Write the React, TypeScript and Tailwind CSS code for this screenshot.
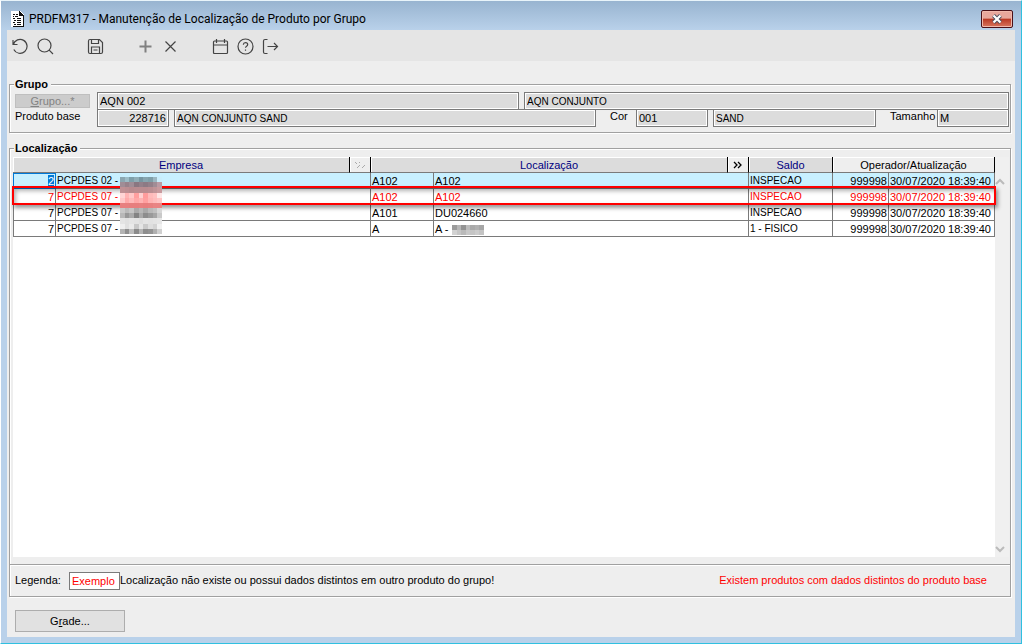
import { useState } from 'react';

const mosaicEmpresa = [
  ['#8ba7b1', '#9bbcc6', '#7e9fa9', '#8fadb6', '#7796a1', '#86a5af', '#7f9fa8', '#9bb8c2', '#c9edfb'],
  ['#a08d96', '#98828b', '#a08d96', '#8a7781', '#93808a', '#8c7a84', '#93808a', '#a08d96', '#bb9ba4'],
  ['#c09094', '#bb8e92', '#b78a8e', '#b98c90', '#b98c90', '#b98c90', '#bb8e92', '#c09498', '#c89a9e'],
  ['#ffd5d5', '#ffb4b4', '#ffc8c8', '#ff9f9f', '#ffd0d0', '#ff9c9c', '#ffbaba', '#ffc1c1', '#ffe6e6'],
  ['#ffc8c8', '#ffaaaa', '#ffb9b9', '#ffa8a8', '#ffb2b2', '#ffa0a0', '#ffb4b4', '#ffbcbc', '#ffc4c4'],
  ['#e88080', '#e88080', '#e77e7e', '#e77e7e', '#e88080', '#e77e7e', '#e88080', '#e98484', '#e98484'],
  ['#c8c8c8', '#b9b9b9', '#c4c4c4', '#a9a9a9', '#b7b7b7', '#a8a8a8', '#b8b8b8', '#c0c0c0', '#d6d6d6'],
  ['#b8b8b8', '#989898', '#aaaaaa', '#838383', '#a9a9a9', '#8d8d8d', '#999999', '#a6a6a6', '#c9c9c9'],
  ['#e4e4e4', '#e0e0e0', '#e4e4e4', '#e2e2e2', '#dedede', '#e4e4e4', '#e2e2e2', '#e4e4e4', '#e6e6e6'],
  ['#efefef', '#e0e0e0', '#eaeaea', '#c8c8c8', '#e5e5e5', '#cacaca', '#dedede', '#d4d4d4', '#f1f1f1'],
  ['#b4b4b4', '#909090', '#bdbdbd', '#8b8b8b', '#b4b4b4', '#8e8e8e', '#949494', '#b0b0b0', '#d0d0d0'],
];

const mosaicLocal = [
  ['#9b9b9b', '#b6b6b6', '#939393', '#bcbcbc', '#a9a9a9', '#b0b0b0', '#a6a6a6'],
  ['#d2d2d2', '#c6c6c6', '#bababa', '#c8c8c8', '#c5c5c5', '#cccccc', '#c4c4c4'],
];

function Mosaic({ tiles, width, height }: { tiles: string[][]; width: number; height: number }) {
  return (
    <svg width={width} height={height} viewBox={`0 0 ${tiles[0].length} ${tiles.length}`} preserveAspectRatio="none" shapeRendering="crispEdges">
      {tiles.map((row, y) => row.map((fill, x) => <rect key={x + '-' + y} x={x} y={y} width="1" height="1" fill={fill} />))}
    </svg>
  );
}

const rows = [
  { cod: '2', empresa: 'PCPDES 02 -', local: 'A102', descricao: 'A102', saldo: 'INSPECAO' },
  { cod: '7', empresa: 'PCPDES 07 -', local: 'A102', descricao: 'A102', saldo: 'INSPECAO', distinto: true },
  { cod: '7', empresa: 'PCPDES 07 -', local: 'A101', descricao: 'DU024660', saldo: 'INSPECAO' },
  { cod: '7', empresa: 'PCPDES 07 -', local: 'A', descricao: 'A -', saldo: '1 - FISICO' },
];

const tools = [
  { label: 'Desfazer', space: '', d: 'M1 2v4.500h4.500M1.300 6.500a7 7 0 1 1 .5 5' },
  { label: 'Pesquisar', space: 'mr-[25px]', d: 'M14 7.500a6.500 6.500 0 1 1-13 0a6.500 6.500 0 1 1 13 0M12.200 12.200L16 16' },
  { label: 'Salvar', space: 'mr-[25px]', d: 'M1.500 3q0-1.500 1.500-1.500h9.500l3 3v9.500q0 1.500-1.500 1.500h-11q-1.500 0-1.500-1.500zM4.500 1.500v4h7v-4M4.500 15.500v-6.500h8v6.500M6.500 12h4' },
  { label: 'Incluir', space: '', d: 'M8.500 2.500v12M2.500 8.500h12', light: true },
  { label: 'Excluir', space: 'mr-[25px]', d: 'M3.500 3.500l10 10M13.500 3.500l-10 10' },
  { label: 'Agenda', space: '', d: 'M1.500 4q0-1 1-1h12q1 0 1 1v10.500q0 1-1 1h-12q-1 0-1-1zM1.500 7h14M4.500 1v4M12.500 1v4' },
  { label: 'Ajuda', space: '', d: 'M16 8.500a7.500 7.500 0 1 1-15 0a7.500 7.500 0 1 1 15 0M6.300 6.700q.2-2 2.200-2q2.200 0 2.200 1.900q0 1-1.100 1.600q-1.100.6-1.100 1.600M8.500 11.500v1.200' },
  { label: 'Sair', space: '', d: 'M5.500 1.500h-2.500q-1.500 0-1.500 1.500v11q0 1.500 1.500 1.500h2.500M5.500 8.500h10M12 5l3.500 3.500l-3.500 3.500' },
];

const groupBox = 'border border-[#a0a0a0] shadow-[1px_1px_0_#fff,inset_1px_1px_0_#fff]';
const field = 'h-[18px] min-w-0 border border-[#7a7a7a] bg-[#dcdcdc] px-[2px] shadow-[inset_0_0_0_1px_#fff] outline-none';
const th = 'h-4 border-r border-b border-r-black border-b-[#7a7a7a] p-0 font-normal shadow-[inset_1px_1px_0_#fff]';
const td = 'h-4 overflow-hidden border-r border-b border-[#7a7a7a] p-0 px-[1px] whitespace-nowrap';

export default function App() {
  const [selected, setSelected] = useState(0);

  return (
    <div className="flex h-screen min-h-[400px] flex-col border-t border-r border-b border-l border-t-[#e8f4fa] border-r-[#30c0e0] border-b-[#30c0e0] border-l-white bg-[#b9d1ea] px-[6px] pb-[6px] font-['Liberation_Sans',Arial,sans-serif] text-[11px] leading-[14px] text-black">
      <header className="-mx-[6px] flex h-[29px] shrink-0 items-center bg-linear-to-b from-[#98b4d0] to-[#b9d1ea] pt-[6px] pr-2 pl-[10px]">
        <svg width="13" height="16" viewBox="0 0 13 16" className="mr-[5px]" shapeRendering="crispEdges">
          <path d="M0 0h9l4 4v12h-13z" fill="#fff" />
          <path d="M8 0h1v1h1v1h1v1h1v1h1v12h-11v-1h10v-10h-4z" fill="#111" />
          <path d="M2 3.500h2M5 3.500h2M2 5.500h1M4 5.500h3M2 7.500h2M6 7.500h4M3 9.500h2M6 9.500h4M2 11.500h2M6 11.500h4M3 13.500h2M6 13.500h4" stroke="#111" strokeWidth="1" />
        </svg>
        <h1 className="flex-1 font-[Roboto,sans-serif] text-[12px] leading-4">PRDFM317 - Manutenção de Localização de Produto por Grupo</h1>
        <button aria-label="Fechar" className="flex h-[18px] w-8 items-center justify-center rounded-[2px] border border-[#4a1018] bg-linear-to-b from-[#e8a79c] from-45% via-[#b93622] via-50% to-[#d8755e] shadow-[inset_0_0_0_1px_#f0b8ac]">
          <svg width="12" height="10" viewBox="0 0 12 10">
            <path d="M2.500 1.500l7 7M9.500 1.500l-7 7" stroke="#4c5060" strokeWidth="4" />
            <path d="M2.500 1.500l7 7M9.500 1.500l-7 7" stroke="#fff" strokeWidth="2.200" />
          </svg>
        </button>
      </header>

      <main className="flex min-h-0 flex-1 flex-col bg-[#eee]">
        <nav className="flex h-[31px] shrink-0 items-center gap-[1px] bg-[#e5e5e5] pt-[2px] pl-px">
          {tools.map((tool) => (
            <button key={tool.label} aria-label={tool.label} className={`flex size-6 items-center justify-center ${tool.space}`}>
              <svg width="17" height="17" viewBox="0 0 17 17" fill="none" stroke={tool.light ? '#808080' : '#444'} strokeWidth={tool.light ? 2 : 1.2}>
                <path d={tool.d} />
              </svg>
            </button>
          ))}
        </nav>

        <section className={`relative mt-[23px] mr-1 ml-[2px] h-[49px] shrink-0 pt-[7px] pr-px pl-[5px] ${groupBox}`}>
          <h2 className="absolute -top-[8px] left-1 bg-[#eee] px-[1px] pr-[3px] text-[11px] font-bold">Grupo</h2>
          <div className="flex items-start">
            <button disabled className="mt-[2px] mr-[7px] h-[14px] w-[75px] shrink-0 border border-[#bfbfbf] bg-[#ccc] leading-3 text-[#838383]">
              <u>G</u>rupo...*
            </button>
            <input aria-label="Grupo" readOnly value="AQN 002" className={`${field} mr-[5px] w-[422px] flex-auto`} />
            <input aria-label="Descrição do grupo" readOnly value="AQN CONJUNTO" className={`${field} w-[485px] flex-auto text-[10px]`} />
          </div>
          <div className="-mt-px flex items-start">
            <label htmlFor="base" className="w-[82px] shrink-0">Produto base</label>
            <input id="base" readOnly value="228716" className={`${field} mr-[5px] w-[72px] text-right`} />
            <input aria-label="Descrição do produto" readOnly value="AQN CONJUNTO SAND" className={`${field} w-[422px] flex-auto text-[10px]`} />
            <label htmlFor="cor" className="w-10 shrink-0 pl-[14px]">Cor</label>
            <input id="cor" readOnly value="001" className={`${field} mr-[5px] w-[72px]`} />
            <input aria-label="Descrição da cor" readOnly value="SAND" className={`${field} w-[163px] flex-auto text-[10px]`} />
            <label htmlFor="tam" className="w-[61px] shrink-0 pl-[14px]">Tamanho</label>
            <input id="tam" readOnly value="M" className={`${field} w-[72px]`} />
          </div>
        </section>

        <section className={`relative mt-[15px] mr-1 ml-[2px] flex min-h-0 flex-1 flex-col ${groupBox}`}>
          <h2 className="absolute -top-[8px] left-1 bg-[#eee] px-[1px] pr-[3px] text-[11px] font-bold">Localização</h2>
          <div className="mt-2 mr-px mb-[7px] ml-[3px] flex min-h-0 flex-1">
            <div className="relative min-w-0 flex-1 bg-white">
              <table className="w-full table-fixed border-separate border-spacing-0">
                <colgroup>
                  <col className="w-[43px]" />
                  <col />
                  <col className="w-[21px]" />
                  <col className="w-[63px]" />
                  <col />
                  <col className="w-[21px]" />
                  <col className="w-[84px]" />
                  <col className="w-[56px]" />
                  <col className="w-[106px]" />
                </colgroup>
                <thead>
                  <tr className="text-[#000080]">
                    <th colSpan={2} className={`${th} bg-[#dcdcdc]`}>Empresa</th>
                    <th className={`${th} bg-[#eee]`}>
                      <button disabled aria-label="Expandir empresa" className="block h-[14px] w-full text-[#aaa]">
                        <svg width="12" height="8" viewBox="0 0 12 8" className="mx-auto" stroke="currentColor" fill="none">
                          <path d="M1 1l2 2M5 1l1 1M3 7l3-3M8 7l3-3" />
                        </svg>
                      </button>
                    </th>
                    <th colSpan={2} className={`${th} bg-[#dcdcdc]`}>Localização</th>
                    <th className={`${th} bg-[#eee]`}>
                      <button aria-label="Expandir localização" className="block h-[14px] w-full text-black">
                        <svg width="10" height="8" viewBox="0 0 10 8" className="mx-auto" stroke="currentColor" strokeWidth="1.300" fill="none">
                          <path d="M1 1l3 3l-3 3M5 1l3 3l-3 3" />
                        </svg>
                      </button>
                    </th>
                    <th className={`${th} bg-[#dcdcdc]`}>Saldo</th>
                    <th colSpan={2} className={`${th} bg-[#eee] text-black`}>Operador/Atualização</th>
                  </tr>
                </thead>
                <tbody>
                  {rows.map((row, i) => (
                    <tr key={i} onClick={() => setSelected(i)} className={`${row.distinto ? 'text-[#f00]' : ''} ${i === selected ? 'bg-[#c8f0ff]' : ''}`}>
                      <td className={`${td} text-right ${i === selected ? 'border border-[#0078d7]' : 'border-l'}`}>
                        <span className={i === selected ? 'bg-[#0078d7] text-white' : ''}>{row.cod}</span>
                      </td>
                      <td colSpan={2} className={`${td} pt-px text-[10px]`}>{row.empresa}</td>
                      <td className={td}>{row.local}</td>
                      <td colSpan={2} className={td}>
                        {row.descricao}
                        {i === 3 && <span className="ml-1 inline-block align-middle"><Mosaic tiles={mosaicLocal} width={32} height={10} /></span>}
                      </td>
                      <td className={`${td} pt-px text-[10px]`}>{row.saldo}</td>
                      <td className={`${td} text-right`}>999998</td>
                      <td className={td}>30/07/2020 18:39:40</td>
                    </tr>
                  ))}
                </tbody>
              </table>
              <div className="pointer-events-none absolute top-[29px] -right-px -left-px h-[19px] border-2 border-[#f00] shadow-[2px_3px_4px_rgba(0,0,0,0.4),inset_2px_3px_4px_rgba(0,0,0,0.3)]" />
              <div className="absolute top-5 left-[107px]">
                <Mosaic tiles={mosaicEmpresa} width={42} height={57} />
              </div>
            </div>
            <div className="flex w-[14px] shrink-0 flex-col justify-between bg-[#f0f0f0] pt-[21px] pb-1 text-[#bbb]">
              <button aria-label="Rolar para cima">
                <svg width="10" height="8" viewBox="0 0 10 8" fill="none" stroke="currentColor" strokeWidth="2"><path d="M1 6l4-4l4 4" /></svg>
              </button>
              <button aria-label="Rolar para baixo">
                <svg width="10" height="8" viewBox="0 0 10 8" fill="none" stroke="currentColor" strokeWidth="2"><path d="M1 2l4 4l4-4" /></svg>
              </button>
            </div>
          </div>
          <div className="flex h-8 shrink-0 items-center border-t border-[#a0a0a0] pl-[5px] shadow-[inset_0_1px_0_#fff]">
            <span className="w-[54px] pb-[2px]">Legenda:</span>
            <span className="h-[18px] w-[51px] border border-[#7a7a7a] bg-white px-[2px] leading-4 text-[#f00]">Exemplo</span>
            <span className="flex-1 pb-[2px]">Localização não existe ou possui dados distintos em outro produto do grupo!</span>
            <span className="mr-[23px] pb-[2px] text-[#f00]">Existem produtos com dados distintos do produto base</span>
          </div>
        </section>

        <footer className="shrink-0 px-2 pt-[13px] pb-[5px]">
          <button className="h-[22px] w-[110px] border border-[#adadad] bg-[#e1e1e1]">
            G<u>r</u>ade...
          </button>
        </footer>
      </main>
    </div>
  );
}
